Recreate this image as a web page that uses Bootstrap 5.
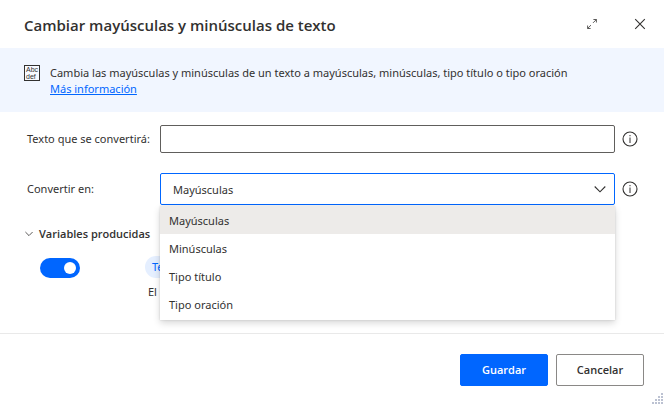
<!DOCTYPE html>
<html lang="es">
<head>
<meta charset="utf-8">
<meta name="viewport" content="width=device-width, initial-scale=1">
<title>Cambiar mayúsculas y minúsculas de texto</title>
<link href="https://cdn.jsdelivr.net/npm/bootstrap@5.3.0/dist/css/bootstrap.min.css" rel="stylesheet">
<style>
  :root { --accent: #0066ff; --ink: #323130; }
  body { font-family: "Noto Sans", "Open Sans", sans-serif; font-size: 11px; line-height: 16px; color: var(--ink); }
  svg { display: block; }
  .dialog-head { height: 48px; padding: 2px 16px 0 24px; }
  .dialog-title { font-family: "Open Sans", sans-serif; font-size: 15px; line-height: 24px; font-weight: 600; }
  .icon-btn { width: 16px; height: 16px; color: var(--ink); }
  .head-tools { gap: 32px; padding-bottom: 2px; }
  .intro { background: #f1f6ff; padding: 17px 24px 15px; gap: 10px; }
  .intro a { color: var(--accent); }
  .dialog-body { padding: 13px 26px 0 27px; }
  .field-label { width: 133px; }
  .field-box { border-radius: 2px; color: var(--ink); font-size: 11px; line-height: 16px; }
  .field-box:focus { box-shadow: none; }
  .text-box { height: 28px; border: 1px solid #605e5c; padding: 4px 8px; }
  .pick-box { height: 32px; border: 1px solid var(--accent); padding: 7px 32px 5px 12px;
    background-image: url("data:image/svg+xml,%3Csvg xmlns='http://www.w3.org/2000/svg' width='12' height='12'%3E%3Cpath d='M.7 3.5 6 8.8 11.3 3.5' fill='none' stroke='%23323130' stroke-width='1.1'/%3E%3C/svg%3E");
    background-size: 12px 12px; background-position: right 8px center; }
  .hint { margin-left: 7px; width: 16px; height: 16px; color: var(--ink); }
  .field-gap { margin-top: 20px; }
  .choices { top: 100%; left: 0; right: 0; z-index: 5; margin-top: 1px; background: #fff;
    box-shadow: 0 3px 7px rgba(0,0,0,.16), 0 0 2px rgba(0,0,0,.14); padding-bottom: 2px; }
  .choice { height: 28px; padding: 7px 9px 5px; color: var(--ink); line-height: 16px; }
  .choice.chosen { background: #edebe9; }
  .produced { margin: 21px 0 0 -2px; gap: 6px; color: var(--ink); font-family: "Open Sans", sans-serif; font-size: 11px; font-weight: 600; line-height: 16px; }
  .vars { margin: 14px 0 0 13px; gap: 65px; }
  .switch-wrap { padding: 0; margin: 2px 0 0; min-height: 0; }
  .switch-wrap .form-check-input { width: 40px; height: 20px; margin: 0; float: none; display: block; border: 0; }
  .switch-wrap .form-check-input:checked {
    background-color: var(--accent); background-position: right 4px center; background-size: 12px 12px;
    background-image: url("data:image/svg+xml,%3Csvg xmlns='http://www.w3.org/2000/svg' viewBox='0 0 12 12'%3E%3Ccircle cx='6' cy='6' r='6' fill='%23fff'/%3E%3C/svg%3E"); }
  .var-chip { background: #e5efff; color: var(--accent); height: 22px; line-height: 22px; padding: 0 7px; min-width: 96px; border-radius: 11px; }
  .var-note { margin: 6px 0 0 3px; }
  .dialog-foot { border-top: 1px solid #e9e9e9; padding: 20px; gap: 8px; }
  .foot-btn { width: 88px; height: 32px; border-radius: 2px; padding: 0; font-family: "Open Sans", sans-serif; font-size: 11px; line-height: 16px; font-weight: 600; }
  .foot-save { background: var(--accent); border-color: var(--accent); color: #fff; }
  .foot-cancel { background: #fff; border-color: #8a8886; color: var(--ink); }
  .grip { right: 1px; bottom: 2px; }
</style>
</head>
<body>
<main class="d-flex flex-column min-vh-100 position-relative">
  <header class="dialog-head d-flex align-items-center justify-content-between">
    <h1 class="dialog-title m-0">Cambiar mayúsculas y minúsculas de texto</h1>
    <div class="head-tools d-flex">
      <button type="button" class="icon-btn btn p-0 border-0" aria-label="Maximizar">
        <svg width="16" height="16" viewBox="0 0 16 16" fill="none" stroke="currentColor" stroke-width=".8"><path d="M9.4 3.5h3v3M12.3 3.6 9 6.9M6.6 12.5h-3v-3M3.7 12.4 7 9.1"/></svg>
      </button>
      <button type="button" class="icon-btn btn p-0 border-0" aria-label="Cerrar">
        <svg width="16" height="16" viewBox="0 0 16 16" fill="none" stroke="currentColor" stroke-width="1.1"><path d="m3.2 3.2 9.6 9.6M12.8 3.2 3.2 12.8"/></svg>
      </button>
    </div>
  </header>

  <section class="intro d-flex">
    <svg class="flex-shrink-0" width="16" height="16" viewBox="0 0 16 16" aria-hidden="true"><rect x=".5" y=".5" width="15" height="15" fill="#f8faff" stroke="#323130"/><g fill="#323130" font-family="Liberation Sans, sans-serif" font-size="7"><text x="2" y="7">Abc</text><text x="2" y="14">def</text></g></svg>
    <div>
      <p class="m-0">Cambia las mayúsculas y minúsculas de un texto a mayúsculas, minúsculas, tipo título o tipo oración</p>
      <a href="#">Más información</a>
    </div>
  </section>

  <form class="dialog-body">
    <div class="d-flex align-items-center">
      <label class="field-label flex-shrink-0" for="source">Texto que se convertirá:</label>
      <input id="source" type="text" class="field-box text-box form-control">
      <button type="button" class="hint btn p-0 border-0 flex-shrink-0" aria-label="Información">
        <svg width="16" height="16" viewBox="0 0 16 16"><circle cx="8" cy="8" r="7" fill="none" stroke="currentColor" stroke-width="1.1"/><path d="M7.5 6.5h1V12h-1zM7.5 4h1v1.2h-1z" fill="currentColor"/></svg>
      </button>
    </div>

    <div class="field-gap d-flex align-items-center">
      <label class="field-label flex-shrink-0" for="mode">Convertir en:</label>
      <div class="position-relative flex-grow-1">
        <select id="mode" class="field-box pick-box form-select">
          <option selected>Mayúsculas</option>
          <option>Minúsculas</option>
          <option>Tipo título</option>
          <option>Tipo oración</option>
        </select>
        <div class="choices position-absolute" role="listbox" aria-label="Convertir en">
          <div class="choice chosen" role="option" aria-selected="true">Mayúsculas</div>
          <div class="choice" role="option" aria-selected="false">Minúsculas</div>
          <div class="choice" role="option" aria-selected="false">Tipo título</div>
          <div class="choice" role="option" aria-selected="false">Tipo oración</div>
        </div>
      </div>
      <button type="button" class="hint btn p-0 border-0 flex-shrink-0" aria-label="Información">
        <svg width="16" height="16" viewBox="0 0 16 16"><circle cx="8" cy="8" r="7" fill="none" stroke="currentColor" stroke-width="1.1"/><path d="M7.5 6.5h1V12h-1zM7.5 4h1v1.2h-1z" fill="currentColor"/></svg>
      </button>
    </div>

    <button type="button" class="produced btn p-0 border-0 d-flex align-items-center" aria-expanded="true">
      <svg width="8" height="8" viewBox="0 0 8 8" fill="none" stroke="currentColor" stroke-width=".8"><path d="M.4 2 4 5.6 7.6 2"/></svg>
      Variables producidas
    </button>
    <div class="vars d-flex align-items-start">
      <div class="switch-wrap form-check form-switch">
        <input class="form-check-input" type="checkbox" role="switch" checked aria-label="Producir variable">
      </div>
      <div>
        <div class="var-chip">Te</div>
        <p class="var-note">El</p>
      </div>
    </div>
  </form>

  <footer class="dialog-foot d-flex justify-content-end mt-auto">
    <button type="submit" class="foot-btn foot-save btn">Guardar</button>
    <button type="button" class="foot-btn foot-cancel btn">Cancelar</button>
  </footer>
  <svg class="grip position-absolute" width="11" height="11" viewBox="0 0 11 11" fill="#bcc2d2" aria-hidden="true"><path d="M9 0h2v2H9zM6 3h2v2H6zM9 3h2v2H9zM3 6h2v2H3zM6 6h2v2H6zM9 6h2v2H9zM0 9h2v2H0zM3 9h2v2H3zM6 9h2v2H6zM9 9h2v2H9z"/></svg>
</main>
<script src="https://cdn.jsdelivr.net/npm/bootstrap@5.3.0/dist/js/bootstrap.bundle.min.js"></script>
</body>
</html>
